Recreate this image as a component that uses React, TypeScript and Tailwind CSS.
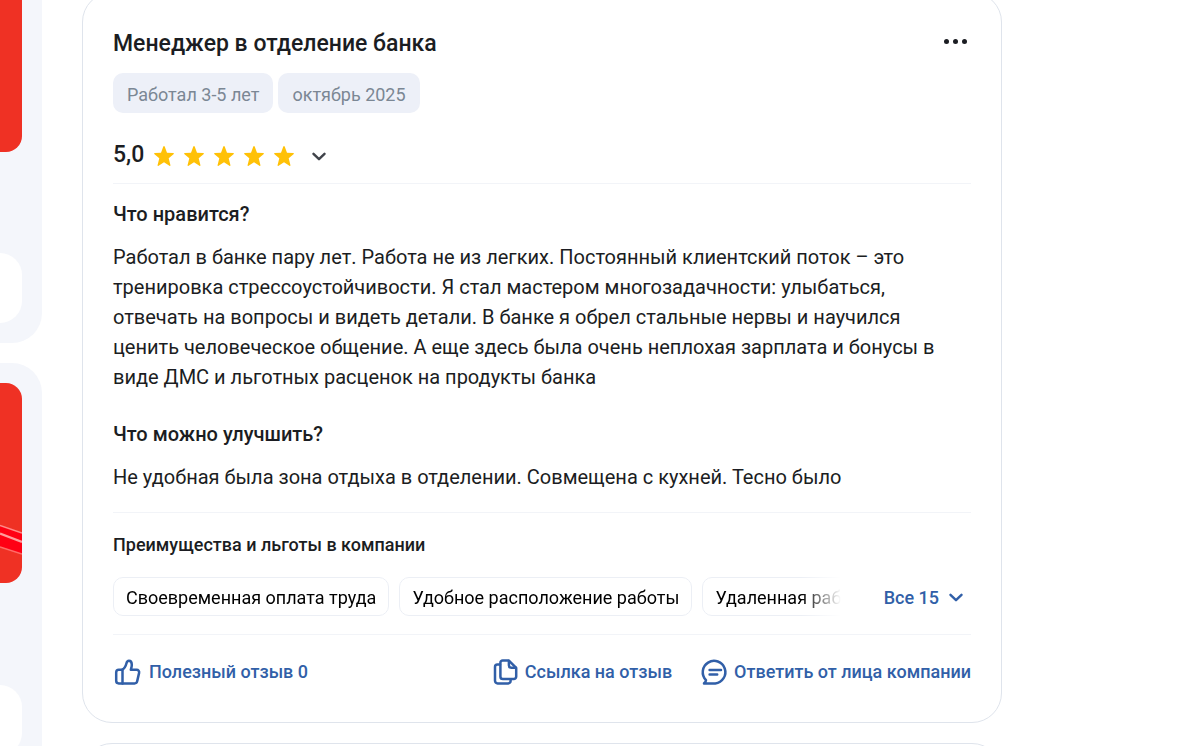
import type { ReactNode } from "react"

interface Section {
  title: string
  text: string
}

const tags = ["Работал 3-5 лет", "октябрь 2025"]

const sections: Section[] = [
  {
    title: "Что нравится?",
    text: "Работал в банке пару лет. Работа не из легких. Постоянный клиентский поток – это тренировка стрессоустойчивости. Я стал мастером многозадачности: улыбаться, отвечать на вопросы и видеть детали. В банке я обрел стальные нервы и научился ценить человеческое общение. А еще здесь была очень неплохая зарплата и бонусы в виде ДМС и льготных расценок на продукты банка",
  },
  {
    title: "Что можно улучшить?",
    text: "Не удобная была зона отдыха в отделении. Совмещена с кухней. Тесно было",
  },
]

const benefits = ["Своевременная оплата труда", "Удобное расположение работы", "Удаленная работа"]

function StarIcon() {
  return (
    <svg viewBox="0 0 20 20" className="size-5" fill="#ffc107" aria-hidden="true">
      <path d="M9.300 .6Q10-.6 10.700 .6L13 6.700 19.200 7.100Q20.500 7.300 19.500 8.300L14.700 12.300 16.400 18.900Q16.600 20.300 15.400 19.700L10 16.300 4.600 19.700Q3.400 20.300 3.600 18.900L5.300 12.300 .5 8.300Q-.5 7.300 .8 7.100L7 6.700Z" />
    </svg>
  )
}

function ChevronIcon() {
  return (
    <svg viewBox="0 0 14 9" className="h-[9px] w-3.5" fill="none" stroke="currentColor" strokeWidth="2.4" strokeLinecap="round" strokeLinejoin="round" aria-hidden="true">
      <path d="m1.5 1.8 5.500 5.400 5.500-5.400" />
    </svg>
  )
}

function LineIcon({ children }: { children: ReactNode }) {
  return (
    <svg viewBox="0 0 28 28" className="size-7 shrink-0" fill="none" stroke="currentColor" strokeWidth="2.5" strokeLinecap="round" strokeLinejoin="round" aria-hidden="true">
      {children}
    </svg>
  )
}

function ThumbIcon() {
  return (
    <LineIcon>
      <path d="M8.8 11.8H5.8a2.600 2.600 0 0 0-2.600 2.600v8.400A2.600 2.600 0 0 0 5.800 25.400h15.600a2.800 2.800 0 0 0 2.800-2.300l1.900-8.200a2.500 2.500 0 0 0-2.400-3.100h-5.900c.4-1.500 1-3 1-5.100 0-2.500-1.200-3.900-2.900-3.900-1.400 0-2.100 1-2.500 2.700-.7 2.900-2 5.400-4.600 6.300Z" />
      <path d="M9.500 11.800v13.600" />
    </LineIcon>
  )
}

function CopyIcon() {
  return (
    <LineIcon>
      <path d="M11.600 2.600h6.300l7.300 7.200v8.800a2.500 2.500 0 0 1-2.500 2.500H12a2.600 2.600 0 0 1-2.600-2.600V4.800a2.200 2.200 0 0 1 2.200-2.200Z" />
      <path d="M17.900 3v4.300a2.500 2.500 0 0 0 2.500 2.500h4.400" />
      <path d="M9 6.600H6.400A2.400 2.400 0 0 0 4 9v13.800a2.600 2.600 0 0 0 2.600 2.600h10.600a2.400 2.400 0 0 0 2.400-2.400v-1.500" />
    </LineIcon>
  )
}

function CommentIcon() {
  return (
    <LineIcon>
      <path d="M15.300 25.400H4c1.200-.8 1.900-1.900 2-3.300A11.300 11.300 0 1 1 15.300 25.400Z" />
      <path d="M9.600 12h11.400M9.600 16.600h7.600" />
    </LineIcon>
  )
}

function Sidebar() {
  return (
    <aside className="-mt-[68px] flex w-[42px] shrink-0 flex-col gap-5">
      <div className="rounded-r-[30px] bg-[#f4f6fb] py-5 pr-5">
        <div className="h-[200px] rounded-r-2xl bg-[#ef3124]" />
        <div className="mt-[101px] h-[70px] rounded-r-3xl bg-white" />
      </div>
      <div className="rounded-r-[30px] bg-[#f4f6fb] py-5 pr-5">
        <div className="h-[200px] overflow-hidden rounded-r-2xl bg-[#ef3124]">
          <svg viewBox="0 0 22 200" className="h-full w-[22px]" aria-hidden="true">
            <path d="M0 142 22 150V171L0 163.500Z" fill="#ff0014" />
            <path d="M0 142.500 22 150" stroke="#ff8a88" strokeWidth="1.500" />
            <path d="M0 150.500 22 159" stroke="#ff9c9c" strokeWidth="2.400" />
            <path d="M0 164 22 171" stroke="#ff6b68" strokeWidth="1.500" />
          </svg>
        </div>
        <div className="mt-[102px] h-[70px] rounded-r-3xl bg-white" />
      </div>
    </aside>
  )
}

function ReviewCard() {
  return (
    <article className="rounded-[30px] border border-[#dfe4ec] px-[30px] pt-9 pb-9">
      <header className="flex items-start justify-between">
        <h2 className="text-[23px] leading-[30px] font-medium">Менеджер в отделение банка</h2>
        <button type="button" aria-label="Ещё" className="flex h-6 items-center gap-1 pr-1">
          <span className="size-[5px] rounded-full bg-[#1b1d22]" />
          <span className="size-[5px] rounded-full bg-[#1b1d22]" />
          <span className="size-[5px] rounded-full bg-[#1b1d22]" />
        </button>
      </header>

      <ul className="mt-3.5 flex gap-[5px]">
        {tags.map((tag) => (
          <li key={tag} className="flex h-10 items-center rounded-[10px] bg-[#edf0f8] px-3.5 pt-1 text-lg leading-6 text-[#7b8794]">
            {tag}
          </li>
        ))}
      </ul>

      <button type="button" aria-label="Оценка 5,0, показать подробности" className="mt-[27px] flex h-[30px] items-center">
        <span className="text-[23px] leading-[30px] font-medium">5,0</span>
        <span className="ml-2.5 flex gap-2.5 pt-0.5">
          {[1, 2, 3, 4, 5].map((star) => (
            <StarIcon key={star} />
          ))}
        </span>
        <span className="ml-[18px] pt-0.5 text-[#40434a]">
          <ChevronIcon />
        </span>
      </button>

      <div className="mt-[13px] flex flex-col gap-[30px] border-y border-[#f2f4f8] pt-[18px] pb-5">
        {sections.map((section) => (
          <section key={section.title}>
            <h3 className="text-xl leading-6 font-medium">{section.title}</h3>
            <p className="mt-4 text-xl leading-[30px]">{section.text}</p>
          </section>
        ))}
      </div>

      <section className="border-b border-[#f2f4f8] pt-5 pb-[18px]">
        <h3 className="text-lg leading-6 font-medium">Преимущества и льготы в компании</h3>
        <div className="mt-5 flex items-center justify-between">
          <ul className="flex max-w-[728px] min-w-0 flex-1 gap-2.5 overflow-hidden mask-[linear-gradient(to_right,black_calc(100%_-_40px),transparent)]">
            {benefits.map((benefit) => (
              <li key={benefit} className="flex h-[39px] shrink-0 items-center rounded-[10px] border border-[#eceff5] px-3 pt-0.5 text-lg leading-6 text-black">
                {benefit}
              </li>
            ))}
          </ul>
          <button type="button" className="flex items-center gap-2.5 pt-0.5 pr-2 text-lg leading-6 font-medium text-[#315fa8]">
            Все 15
            <ChevronIcon />
          </button>
        </div>
      </section>

      <footer className="mt-[23px] flex items-center justify-between text-lg leading-6 font-medium text-[#315fa8]">
        <button type="button" className="flex items-center gap-2">
          <ThumbIcon />
          Полезный отзыв 0
        </button>
        <div className="flex items-center gap-7">
          <button type="button" className="flex items-center gap-1.5">
            <CopyIcon />
            Ссылка на отзыв
          </button>
          <button type="button" className="flex items-center gap-1.5">
            <CommentIcon />
            Ответить от лица компании
          </button>
        </div>
      </footer>
    </article>
  )
}

export default function App() {
  return (
    <div className="flex h-screen gap-10 overflow-hidden bg-white font-['Roboto',sans-serif] text-[#1b1d22]">
      <Sidebar />
      <main className="-mt-2 flex max-w-[920px] min-w-0 flex-1 flex-col gap-5">
        <ReviewCard />
        <div className="h-[400px] shrink-0 rounded-[30px] border border-[#dfe4ec]" />
      </main>
    </div>
  )
}
